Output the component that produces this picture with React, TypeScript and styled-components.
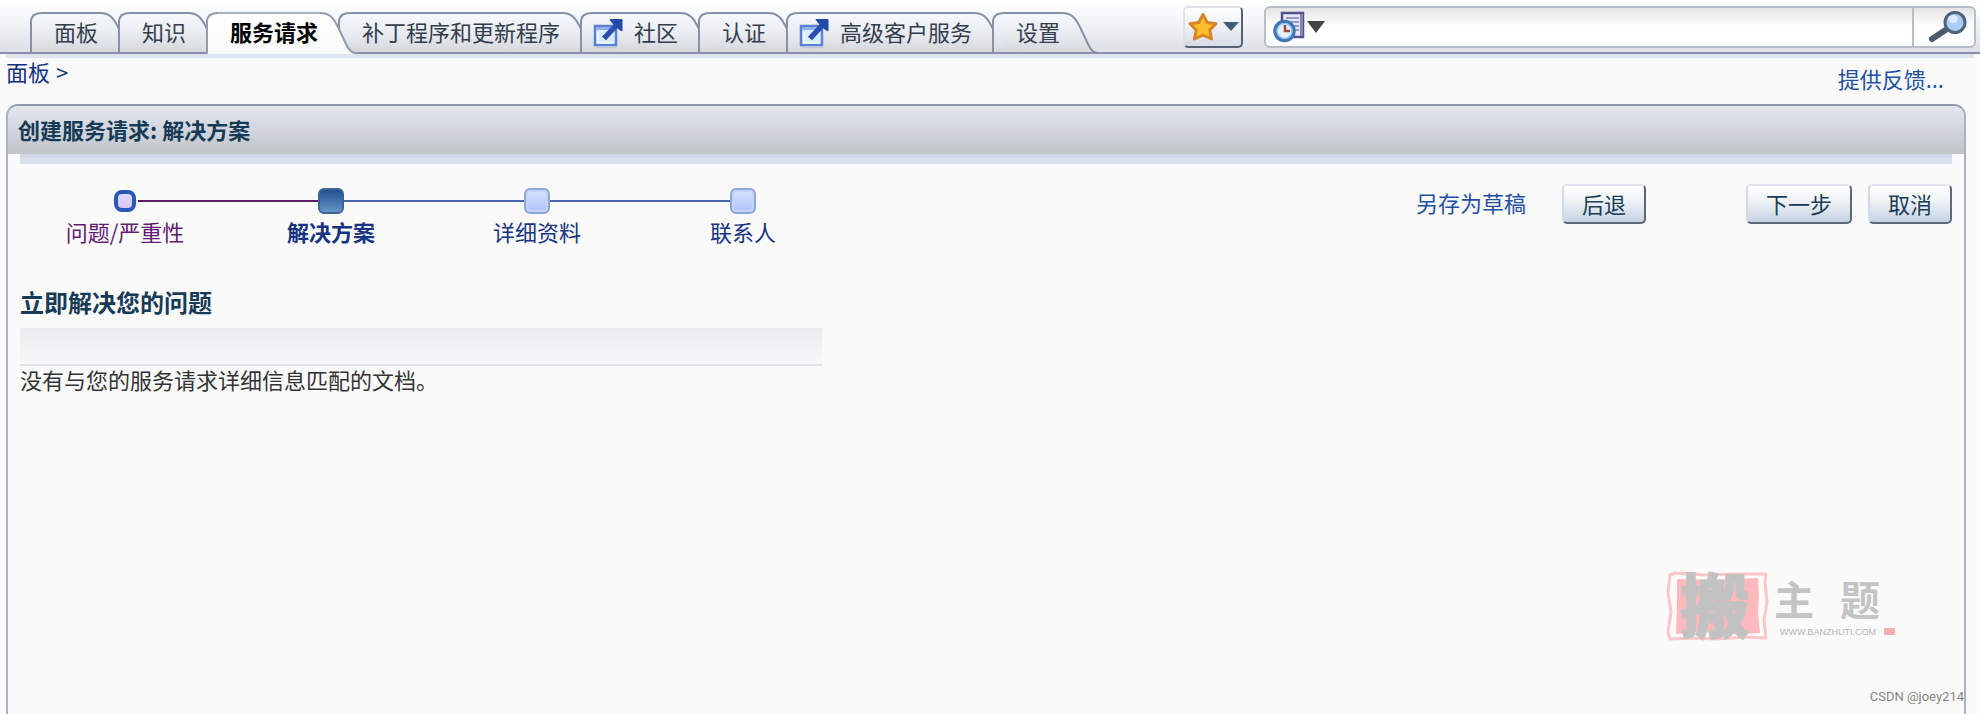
import React from "react";
import styled, { createGlobalStyle, css } from "styled-components";

const Global = createGlobalStyle`
  * { box-sizing: border-box; }
  html, body, #root { height: 100%; }
  body {
    margin: 0;
    background: #fafafa;
    color: #333;
    font-family: "Noto Sans CJK SC", sans-serif;
    font-size: 22px;
    line-height: 26px;
  }
  a { text-decoration: none; color: #2450a4; }
  button, input { font: inherit; }
`;

const Page = styled.div`
  min-height: 100%;
  display: flex;
  flex-direction: column;
`;

const TopBar = styled.header`
  height: 54px;
  display: flex;
  align-items: flex-end;
  padding-left: 30px;
  background: linear-gradient(#fff 0, #f6f7fa 35%, #dddfe6 100%);
  border-bottom: 2px solid #8790a8;
`;

const TabList = styled.nav`
  display: flex;
  height: 40px;
`;

const TabLink = styled.a<{ $active?: boolean; $icon?: boolean }>`
  position: relative;
  z-index: ${(p) => (p.$active ? 2 : 1)};
  display: flex;
  align-items: center;
  height: 42px;
  padding: 0 20px 0 ${(p) => (p.$icon ? 13 : 24)}px;
  white-space: nowrap;
  color: #333d4d;
  ${(p) => p.$active && css`
    color: #000;
    font-weight: 700;
  `}
`;

const TabShape = styled.span`
  position: absolute;
  z-index: -1;
  inset: 0;
  display: flex;
  margin-right: -18px;
  svg { flex: none; display: block; }
`;

const TabMiddle = styled.span<{ $active?: boolean }>`
  flex: 1;
  height: 42px;
  border-top: 2px solid ${(p) => (p.$active ? "#a9b1bd" : "#8592a6")};
  background: ${(p) => (p.$active ? "linear-gradient(#fff, #fafafa)" : "linear-gradient(#f5f8fc, #e9ecf1 50%, #d5d7db)")};
  border-bottom: ${(p) => (p.$active ? "0" : "2px solid #8790a8")};
`;

const TabLabel = styled.span`
  padding-bottom: 4px;
`;

const TabIcon = styled.span`
  display: flex;
  margin-right: 11px;
`;

function TabFill({ active, id }: { active?: boolean; id: string }) {
  const stroke = active ? "#929cac" : "#8592a6";
  const fill = `url(#fill-${id})`;
  return (
    <TabShape aria-hidden="true">
      <svg width="12" height="42" viewBox="0 0 12 42">
        <defs>
          <linearGradient id={`fill-${id}`} x1="0" y1="0" x2="0" y2="42" gradientUnits="userSpaceOnUse">
            {active ? (
              <>
                <stop offset="0" stopColor="#fff" />
                <stop offset="1" stopColor="#fafafa" />
              </>
            ) : (
              <>
                <stop offset="0" stopColor="#f5f8fc" />
                <stop offset="0.5" stopColor="#e9ecf1" />
                <stop offset="1" stopColor="#d5d7db" />
              </>
            )}
          </linearGradient>
        </defs>
        <path d="M1 42V10Q1 1 12 1V42Z" fill={fill} />
        <path d="M1 42V10Q1 1 12 1" fill="none" stroke={stroke} strokeWidth="2" />
        {!active && <path d="M0 41H12" stroke="#8790a8" strokeWidth="2" />}
      </svg>
      <TabMiddle $active={active} />
      <svg width="36" height="42" viewBox="0 0 36 42">
        <path d="M0 1C9 1 13 5 18 15L26 32Q30 41 35 41L34 42H0Z" fill={fill} />
        <path d="M0 1C9 1 13 5 18 15L26 32Q30 41 36 41" fill="none" stroke={stroke} strokeWidth="2" />
        {!active && <path d="M0 41H36" stroke="#8790a8" strokeWidth="2" />}
      </svg>
    </TabShape>
  );
}

function ExternalIcon() {
  return (
    <svg width="30" height="32" viewBox="0 0 30 32" aria-hidden="true">
      <rect x="2" y="9" width="21" height="19" fill="#dcecff" stroke="#5b80d4" strokeWidth="2.500" />
      <path d="M3 11.500H22" stroke="#8fb0ec" strokeWidth="3" />
      <path d="M5 15V26H20" fill="none" stroke="#f5faff" strokeWidth="1.500" />
      <path d="M11 21.500L24 7.500" stroke="#2a4fae" strokeWidth="5.500" />
      <path d="M17 2.500H29V14L25 11.500L19.500 6Z" fill="#2348a8" stroke="#2348a8" strokeLinejoin="round" />
      <path d="M3 30.500H24" stroke="#c2c8d4" strokeWidth="1.500" />
    </svg>
  );
}

const Tools = styled.div`
  flex: 1;
  display: flex;
  align-items: center;
  align-self: flex-start;
  gap: 21px;
  padding: 6px 4px 0 0;
  margin-left: 103px;
`;

const FavoriteButton = styled.button`
  display: flex;
  align-items: center;
  justify-content: center;
  gap: 5px;
  width: 60px;
  height: 42px;
  padding: 0;
  border: 2px solid;
  border-color: #dfe2e8 #566176 #566176 #dfe2e8;
  border-radius: 5px;
  background: linear-gradient(#fff, #eef0f4 50%, #d6dbe5);
`;

const SearchBox = styled.form`
  flex: 1;
  display: flex;
  height: 42px;
  border: 2px solid #b9bec6;
  border-radius: 6px;
  overflow: hidden;
  background: linear-gradient(#e4e4e6, #fff 50%);
`;

const SearchScope = styled.button`
  display: flex;
  align-items: center;
  gap: 2px;
  padding: 0 0 0 7px;
  border: 0;
  background: transparent;
`;

const SearchInput = styled.input`
  flex: 1;
  min-width: 0;
  border: 0;
  outline: 0;
  background: transparent;
`;

const SearchButton = styled.button`
  display: flex;
  align-items: center;
  justify-content: center;
  width: 62px;
  padding: 0 0 0 8px;
  border: 0;
  border-left: 2px solid #b9bec6;
  background: transparent;
`;

const TopShade = styled.div`
  height: 4px;
  margin: 0 6px;
  background: #dfe4ef;
`;

const SubBar = styled.div`
  display: flex;
  justify-content: space-between;
  height: 46px;
  padding: 0 36px 0 6px;
`;

const Breadcrumb = styled.nav`
  display: flex;
  gap: 6px;
  color: #1b3a7c;
  a { color: #123080; }
`;

const FeedbackLink = styled.a`
  padding-top: 7px;
`;

const Panel = styled.main`
  flex: 1;
  position: relative;
  margin: 0 14px 0 6px;
  border: 2px solid #a9b2c2;
  border-top: 2px solid #8f98ae;
  border-bottom: 0;
  border-radius: 12px 12px 0 0;
`;

const PanelTitle = styled.h1`
  height: 48px;
  margin: 0;
  padding: 10px;
  border-radius: 10px 10px 0 0;
  background: linear-gradient(#e3e7ee, #d2d5dd 50%, #c0c5ca);
  font-size: 22px;
  line-height: 26px;
  color: #163b56;
`;

const PanelShade = styled.div`
  height: 10px;
  margin: 0 12px;
  background: linear-gradient(#cdd5e3, #d9e0ee 50%);
`;

const Toolbar = styled.div`
  display: flex;
  justify-content: space-between;
  align-items: flex-start;
  padding: 20px 12px 0 14px;
`;

const Steps = styled.ol`
  display: flex;
  margin: 0;
  padding: 4px 0 0;
  list-style: none;
`;

type StepState = "visited" | "current" | "todo";

const StepItem = styled.li<{ $line?: string }>`
  position: relative;
  display: flex;
  flex-direction: column;
  align-items: center;
  gap: 4px;
  width: 206px;
  ${(p) => p.$line && css`
    &::after {
      content: "";
      position: absolute;
      top: 12px;
      left: calc(50% + 13px);
      width: calc(100% - 26px);
      height: 2px;
      background: ${p.$line};
    }
  `}
`;

const StepNode = styled.span<{ $state: StepState }>`
  width: 26px;
  height: 26px;
  border-radius: 6px;
  ${(p) => p.$state === "visited" && css`
    border: 4px solid #2858b8;
    border-radius: 8px;
    width: 22px;
    height: 22px;
    margin: 2px;
    background: linear-gradient(#dfd9ff, #d9c6f6);
  `}
  ${(p) => p.$state === "current" && css`
    border: 2px solid #3c6595;
    background: linear-gradient(#225192, #6394c5);
  `}
  ${(p) => p.$state === "todo" && css`
    border: 2px solid #8ea5de;
    box-shadow: inset 0 0 0 2px #c5d4fa;
    background: linear-gradient(#d7e3ff, #afc3f6);
  `}
`;

const StepLink = styled.a<{ $state: StepState }>`
  color: ${(p) => (p.$state === "visited" ? "#641b72" : "#163480")};
  font-weight: ${(p) => (p.$state === "current" ? 700 : 400)};
`;

const Actions = styled.div`
  display: flex;
  align-items: flex-start;
  gap: 16px;
`;

const DraftLink = styled.a`
  padding-top: 5px;
  margin-right: 20px;
`;

const ActionButton = styled.button<{ $spaced?: boolean }>`
  height: 40px;
  padding: 4px 18px 6px;
  margin-right: ${(p) => (p.$spaced ? 84 : 0)}px;
  border: 2px solid;
  border-color: #e2e6ec #5d6979 #5d6979 #d4dae3;
  border-radius: 5px;
  background: linear-gradient(#fff, #edf1f5 45%, #c5d2e3);
  color: #193d57;
  line-height: 26px;
`;

const Results = styled.section`
  width: 41%;
  min-width: 420px;
  margin-left: 12px;
`;

const ResultsTitle = styled.h2`
  margin: 42px 0 10px;
  font-size: 24px;
  line-height: 32px;
  color: #163b56;
`;

const ResultsBar = styled.div`
  height: 38px;
  border-bottom: 2px solid #e0e1e5;
  background: linear-gradient(#ebebef, #f8f8fa);
`;

const ResultsText = styled.p`
  margin: 0;
  color: #333;
`;

const SiteMark = styled.div`
  position: absolute;
  right: 66px;
  bottom: 48px;
  svg { display: block; }
`;

const Credit = styled.div`
  position: absolute;
  right: 0;
  bottom: 8px;
  font: 13px/18px Roboto, "Liberation Sans", sans-serif;
  color: #858585;
`;

const tabs = [
  { label: "面板" },
  { label: "知识" },
  { label: "服务请求", active: true },
  { label: "补丁程序和更新程序" },
  { label: "社区", icon: true },
  { label: "认证" },
  { label: "高级客户服务", icon: true },
  { label: "设置" },
];

const steps: { label: string; state: StepState; line?: string }[] = [
  { label: "问题/严重性", state: "visited", line: "#5b1d66" },
  { label: "解决方案", state: "current", line: "#4867af" },
  { label: "详细资料", state: "todo", line: "#4867af" },
  { label: "联系人", state: "todo" },
];

export default function App() {
  return (
    <Page>
      <Global />
      <TopBar>
        <TabList>
          {tabs.map((t, i) => (
            <TabLink key={t.label} href="#" $active={t.active} $icon={t.icon}>
              <TabFill active={t.active} id={String(i)} />
              {t.icon && <TabIcon><ExternalIcon /></TabIcon>}
              <TabLabel>{t.label}</TabLabel>
            </TabLink>
          ))}
        </TabList>
        <Tools>
          <FavoriteButton type="button" aria-label="收藏夹">
            <svg width="30" height="30" viewBox="0 0 30 30" aria-hidden="true">
              <path d="M15 2.500L19.200 10.500L28 11.800L21.800 18L23.500 27L15 23L6.500 27L8.200 18L2 11.800L10.800 10.500Z" fill="#fdbf2d" stroke="#d98428" strokeWidth="3" strokeLinejoin="round" />
            </svg>
            <svg width="16" height="10" viewBox="0 0 16 10" aria-hidden="true"><path d="M0 0H16L8 9Z" fill="#3f5d75" /></svg>
          </FavoriteButton>
          <SearchBox role="search">
            <SearchScope type="button" aria-label="搜索范围">
              <svg width="32" height="32" viewBox="0 0 32 32" aria-hidden="true">
                <path d="M9 2H30V26H9Z" fill="#e6e8f8" stroke="#55508a" strokeWidth="2.500" />
                <path d="M28.500 3V25" stroke="#8482b4" strokeWidth="3" />
                <path d="M13 7H26M14 11H26M17 15H26M20 19H26" stroke="#7d7bb5" strokeWidth="1.500" />
                <circle cx="11.500" cy="20" r="9.500" fill="#e4f2ff" stroke="#3f77b5" strokeWidth="3.500" />
                <circle cx="11.500" cy="20" r="7.500" fill="none" stroke="#93c4ec" strokeWidth="1.500" />
                <path d="M12 14V20H17" fill="none" stroke="#9a4a3a" strokeWidth="2.500" />
              </svg>
              <svg width="18" height="13" viewBox="0 0 18 13" aria-hidden="true"><path d="M0 0H18L9 12Z" fill="#444" /></svg>
            </SearchScope>
            <SearchInput aria-label="搜索" />
            <SearchButton type="submit" aria-label="搜索">
              <svg width="40" height="34" viewBox="0 0 40 34" aria-hidden="true">
                <path d="M4 29L19 19" stroke="#4d5a6d" strokeWidth="6" strokeLinecap="round" />
                <circle cx="27" cy="12.500" r="10" fill="#a9cdf5" stroke="#4f6379" strokeWidth="3" />
                <ellipse cx="25" cy="9" rx="5" ry="4" fill="#d8eaff" />
              </svg>
            </SearchButton>
          </SearchBox>
        </Tools>
      </TopBar>
      <TopShade />
      <SubBar>
        <Breadcrumb aria-label="路径"><a href="#">面板</a><span>&gt;</span></Breadcrumb>
        <FeedbackLink href="#">提供反馈...</FeedbackLink>
      </SubBar>
      <Panel>
        <PanelTitle>创建服务请求: 解决方案</PanelTitle>
        <PanelShade />
        <Toolbar>
          <Steps>
            {steps.map((s) => (
              <StepItem key={s.label} $line={s.line}>
                <StepNode $state={s.state} />
                <StepLink href="#" $state={s.state}>{s.label}</StepLink>
              </StepItem>
            ))}
          </Steps>
          <Actions>
            <DraftLink href="#">另存为草稿</DraftLink>
            <ActionButton type="button" $spaced>后退</ActionButton>
            <ActionButton type="button">下一步</ActionButton>
            <ActionButton type="button">取消</ActionButton>
          </Actions>
        </Toolbar>
        <Results>
          <ResultsTitle>立即解决您的问题</ResultsTitle>
          <ResultsBar />
          <ResultsText>没有与您的服务请求详细信息匹配的文档。</ResultsText>
        </Results>
        <SiteMark>
          <svg width="232" height="130" viewBox="0 -36 232 130" role="img" aria-label="搬主题">
            <path d="M4 3L9 1L40 3L70 2L100 2L99 10L101 30L98 48L100 66L80 65L50 67L28 66L4 67L2 60L5 40L2 20Z" fill="none" stroke="#fcc5c8" strokeWidth="3" strokeLinejoin="round" />
            <path d="M11 7L50 8L92 6L93 22L92 40L94 61L70 62L40 60L10 62L11 30Z" fill="#ffb9bd" />
            <text x="14" y="61" fontSize="70" fontWeight="900" fontFamily="Noto Sans CJK SC" fill="#c2c2c2" stroke="#c2c2c2" strokeWidth="1">搬</text>
            <text x="108" y="43" fontSize="40" fontWeight="700" fontFamily="Noto Sans CJK SC" fill="#c4c4c4">主</text>
            <text x="174" y="43" fontSize="40" fontWeight="700" fontFamily="Noto Sans CJK SC" fill="#c4c4c4">题</text>
            <text x="114" y="63" fontSize="9" fontFamily="Liberation Sans" fill="#b5b5b5">WWW.BANZHUTI.COM</text>
            <path d="M218 56H229V63H218Z" fill="#f9adb0" />
          </svg>
        </SiteMark>
        <Credit>CSDN @joey214</Credit>
      </Panel>
    </Page>
  );
}
